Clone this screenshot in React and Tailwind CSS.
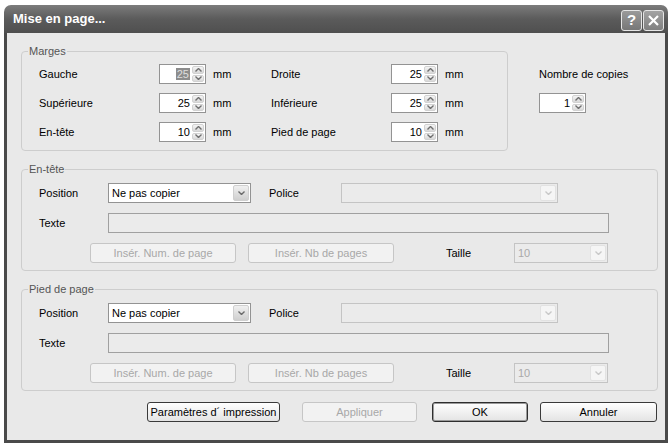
import React from "react";

const font = { fontFamily: '"Liberation Sans", Arial, sans-serif' };

function Chevron({ up, color = "#6f6f6f" }) {
  return (
    <svg width="7" height="4" viewBox="0 0 7 4">
      <polyline
        points={up ? "0.5,3.5 3.5,0.5 6.5,3.5" : "0.5,0.5 3.5,3.5 6.5,0.5"}
        fill="none"
        stroke={color}
        strokeWidth="1.4"
      />
    </svg>
  );
}

function Spin({ value, selected }) {
  return (
    <div className="flex h-[20px] w-[47px] border border-[#939393] bg-white">
      <div className="flex flex-1 items-center justify-end pr-[2px]">
        <span className={selected ? "bg-[#8c8c8c] px-[1px] leading-[12px] text-[#dedede]" : ""}>
          {value}
        </span>
      </div>
      <div className="flex w-[13px] flex-col gap-[1px] py-[1px] pr-[1px]">
        <div className="flex flex-1 items-center justify-center rounded-[2px] border border-[#d2d2d2] bg-gradient-to-b from-[#f4f4f4] to-[#d9d9d9]">
          <Chevron up />
        </div>
        <div className="flex flex-1 items-center justify-center rounded-[2px] border border-[#d2d2d2] bg-gradient-to-b from-[#f4f4f4] to-[#d9d9d9]">
          <Chevron />
        </div>
      </div>
    </div>
  );
}

function Select({ value, disabled, width }) {
  return (
    <div
      className={`flex h-[20px] border ${width} ${
        disabled ? "border-[#c4c4c4] bg-[#ebebeb] text-[#a9a9a9]" : "border-[#939393] bg-white text-black"
      }`}
    >
      <div className="flex flex-1 items-center pl-[3px]">{value}</div>
      <div className="p-[1px]">
        <div
          className={`flex h-full w-[16px] items-center justify-center rounded-[2px] border ${
            disabled ? "border-[#e2e2e2] bg-[#f5f5f5]" : "border-[#cfcfcf] bg-gradient-to-b from-[#f0f0f0] to-[#cfcfcf]"
          }`}
        >
          <Chevron color={disabled ? "#c8c8c8" : "#6a6a6a"} />
        </div>
      </div>
    </div>
  );
}

function Btn({ children, width, disabled, primary }) {
  return (
    <div
      className={`flex h-[20px] items-center justify-center rounded-[3px] border ${width} ${
        disabled
          ? "border-[#c6c6c6] bg-[#f2f2f2] text-[#a8a8a8]"
          : primary
          ? "border-[#2e2e2e] bg-gradient-to-b from-white to-[#e4e4e4] text-black shadow-[inset_0_0_0_1px_#9a9a9a]"
          : "border-[#3a3a3a] bg-gradient-to-b from-white to-[#e4e4e4] text-black"
      }`}
    >
      {children}
    </div>
  );
}

function Group({ title, width, children }) {
  return (
    <fieldset className={`rounded-[4px] border border-[#cdcdcd] ${width}`}>
      <legend className="ml-[6px] px-[1px] leading-[13px] text-[#555]">{title}</legend>
      {children}
    </fieldset>
  );
}

function MarginRow({ l1, v1, l2, v2, selected }) {
  return (
    <div className="flex h-[20px] items-center">
      <div className="w-[120px]">{l1}</div>
      <Spin value={v1} selected={selected} />
      <div className="w-[65px] pl-[7px]">mm</div>
      <div className="w-[120px]">{l2}</div>
      <Spin value={v2} />
      <div className="pl-[7px]">mm</div>
    </div>
  );
}

function HeaderGroup({ title }) {
  return (
    <Group title={title} width="w-[637px]">
      <div className="flex flex-col gap-[10px] pb-[7px] pl-[17px] pt-[7px]">
        <div className="flex h-[20px] items-center">
          <div className="w-[69px]">Position</div>
          <Select value="Ne pas copier" width="w-[143px]" />
          <div className="w-[90px] pl-[18px]">Police</div>
          <Select value="" width="w-[217px]" disabled />
        </div>
        <div className="flex h-[20px] items-center">
          <div className="w-[69px]">Texte</div>
          <div className="h-[20px] w-[501px] border border-[#a0a0a0] bg-[#ebebeb]" />
        </div>
        <div className="flex h-[20px] items-center pl-[51px]">
          <Btn width="w-[146px]" disabled>
            Insér. Num. de page
          </Btn>
          <div className="ml-[12px]">
            <Btn width="w-[146px]" disabled>
              Insér. Nb de pages
            </Btn>
          </div>
          <div className="w-[120px] pl-[52px]">Taille</div>
          <Select value="10" width="w-[94px]" disabled />
        </div>
      </div>
    </Group>
  );
}

export default function App() {
  return (
    <div className="h-[443px] w-[671px] overflow-hidden bg-white pl-[4px] pt-[5px] text-[11px]" style={font}>
      <div className="flex h-[438px] w-[664px] flex-col overflow-hidden rounded-t-[7px]">
        <div className="flex h-[28px] shrink-0 items-center justify-between bg-gradient-to-b from-[#7c7c7c] via-[#5b5b5b] to-[#4f4f4f] pl-[9px] pr-[4px]">
          <span className="text-[13px] font-bold text-white">Mise en page...</span>
          <div className="flex gap-[1px] pt-[3px]">
            <div className="flex h-[21px] w-[21px] items-center justify-center rounded-[3px] border border-[#e6e6e6] bg-gradient-to-b from-[#9a9a9a] to-[#777] text-[15px] font-bold text-white">
              ?
            </div>
            <div className="flex h-[21px] w-[21px] items-center justify-center rounded-[3px] border border-[#e6e6e6] bg-gradient-to-b from-[#a3a3a3] to-[#808080]">
              <svg width="11" height="11" viewBox="0 0 11 11">
                <path d="M1 1L10 10M10 1L1 10" stroke="white" strokeWidth="2.2" />
              </svg>
            </div>
          </div>
        </div>
        <div className="flex flex-1 flex-col border-x-[3px] border-b-[3px] border-[#4a4a4a] bg-[#e9e9e9] pl-[14px] pt-[12px]">
          <div className="flex">
            <Group title="Marges" width="w-[487px]">
              <div className="flex flex-col gap-[9px] pb-[8px] pl-[17px] pt-[6px]">
                <MarginRow l1="Gauche" v1="25" l2="Droite" v2="25" selected />
                <MarginRow l1="Supérieure" v1="25" l2="Inférieure" v2="25" />
                <MarginRow l1="En-tête" v1="10" l2="Pied de page" v2="10" />
              </div>
            </Group>
            <div className="ml-[31px] flex flex-col pt-[19px]">
              <div className="flex h-[20px] items-center">Nombre de copies</div>
              <div className="mt-[9px]">
                <Spin value="1" />
              </div>
            </div>
          </div>
          <div className="mt-[12px]">
            <HeaderGroup title="En-tête" />
          </div>
          <div className="mt-[12px]">
            <HeaderGroup title="Pied de page" />
          </div>
          <div className="mt-[11px] flex pl-[126px]">
            <Btn width="w-[133px]">Paramètres d´ impression</Btn>
            <div className="ml-[22px]">
              <Btn width="w-[115px]" disabled>
                Appliquer
              </Btn>
            </div>
            <div className="ml-[15px]">
              <Btn width="w-[96px]" primary>
                OK
              </Btn>
            </div>
            <div className="ml-[12px]">
              <Btn width="w-[117px]">Annuler</Btn>
            </div>
          </div>
        </div>
      </div>
    </div>
  );
}
